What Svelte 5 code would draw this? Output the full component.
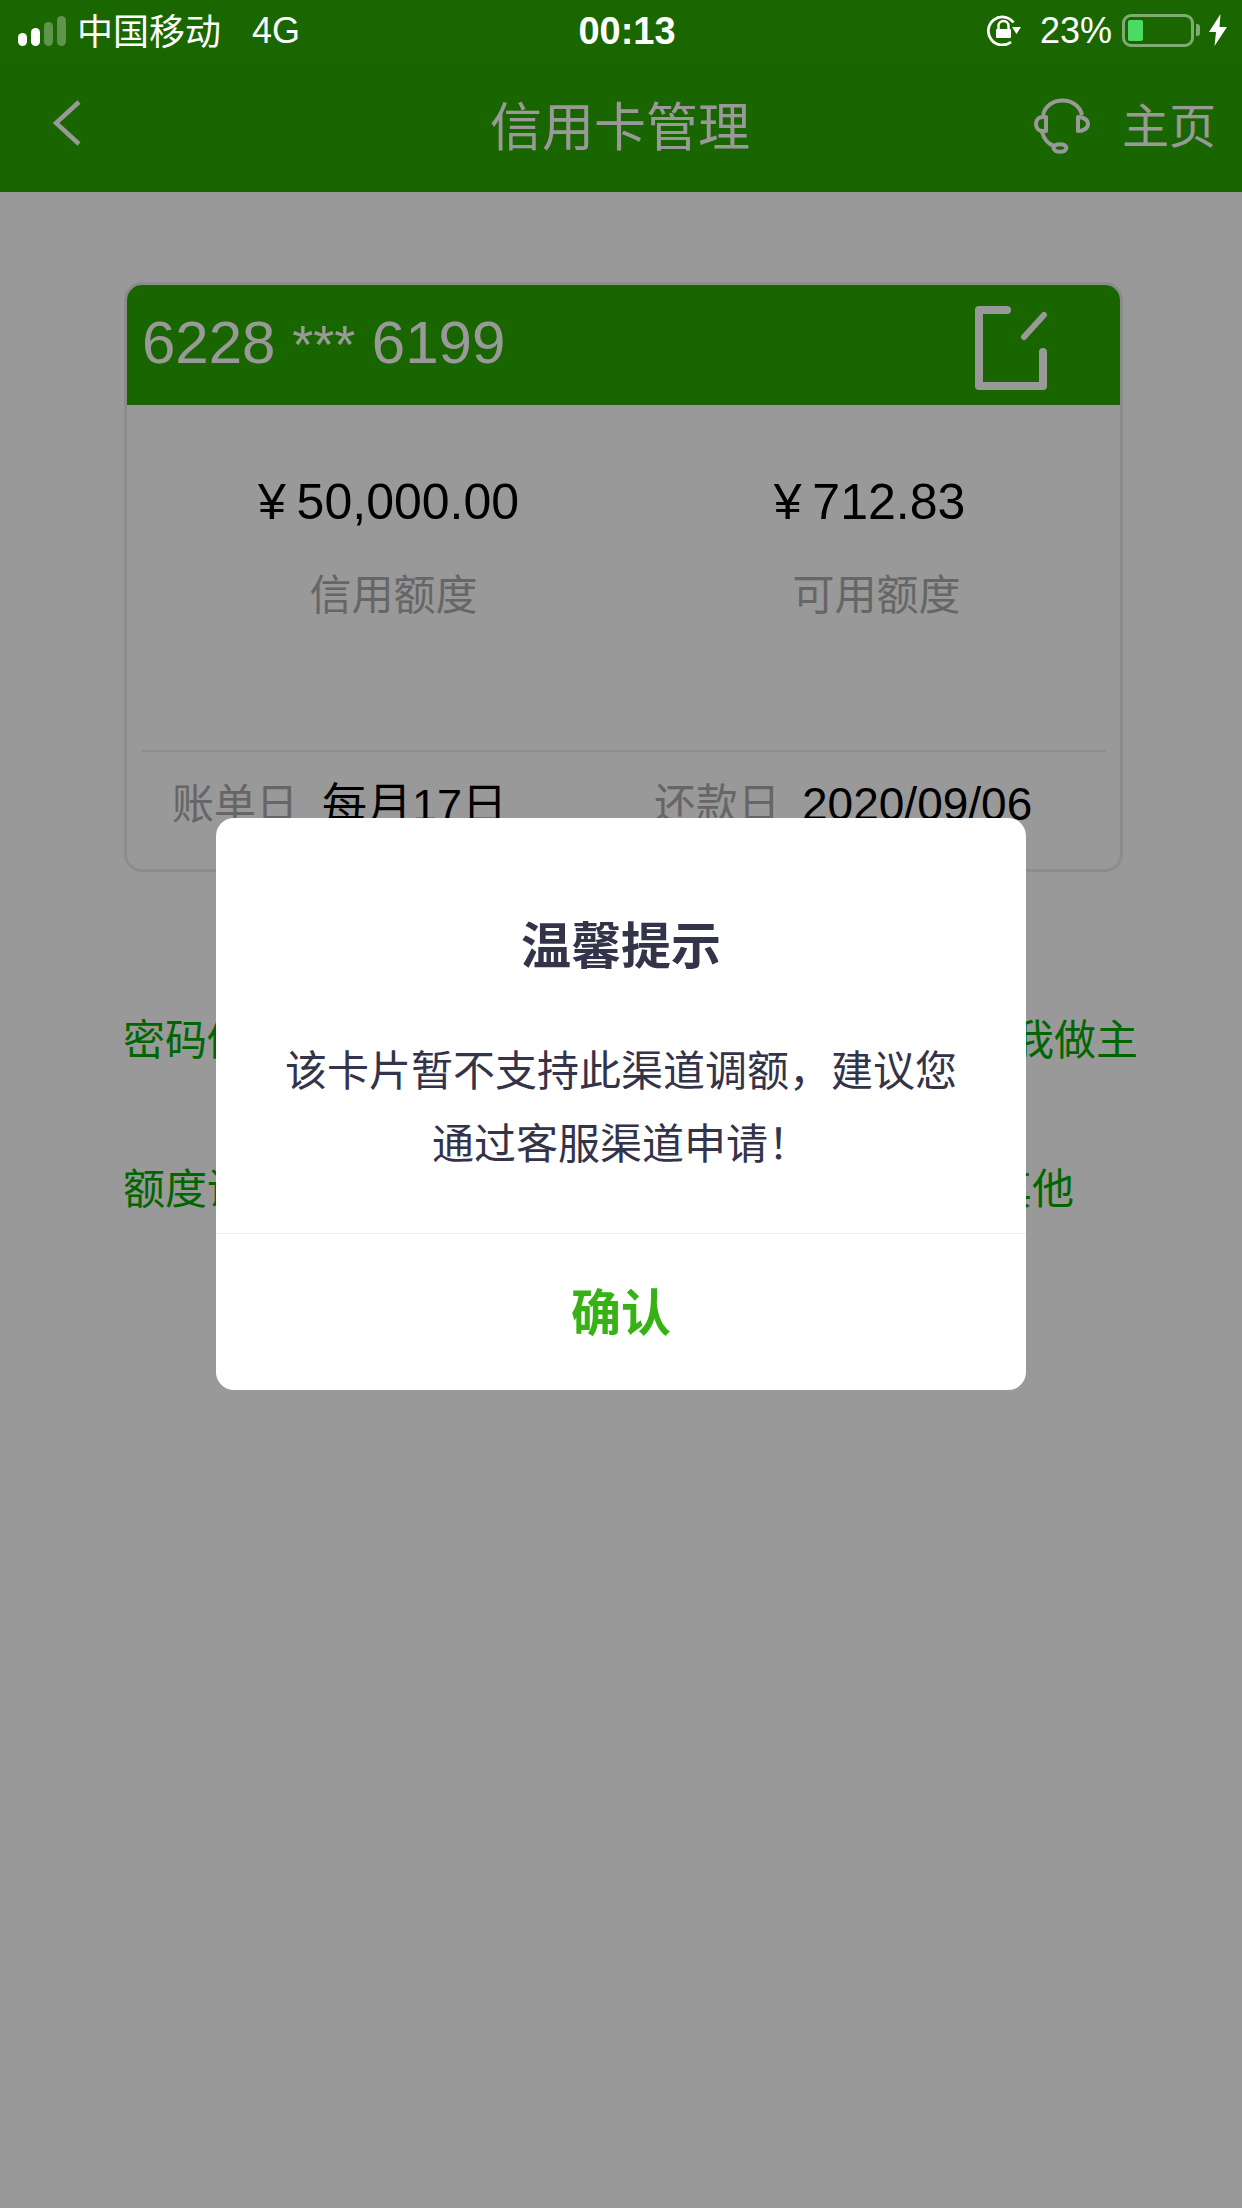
<script lang="ts">
  // Credit card management page with the "not supported" dialog open
  const links = [
    { left: '密码修改', right: '账单由我做主', short: false },
    { left: '额度调整', right: '卡片其他', short: true },
  ];
</script>

<div class="page">
  <div class="status">
    <div class="status-left">
      <svg class="signal" width="48" height="30" viewBox="0 0 48 30">
        <rect x="0" y="17" width="9" height="13" rx="4.5" fill="#fff" />
        <rect x="13" y="12" width="9" height="18" rx="4.5" fill="#fff" />
        <rect x="26" y="6" width="9" height="24" rx="4.5" fill="#fff" opacity="0.3" />
        <rect x="39" y="0" width="9" height="30" rx="4.5" fill="#fff" opacity="0.3" />
      </svg>
      <span class="carrier">中国移动</span>
      <span class="net">4G</span>
    </div>
    <div class="time">00:13</div>
    <div class="status-right">
      <svg class="lock" width="36" height="32" viewBox="0 0 36 32">
        <path d="M27.5 8.5A14 14 0 1 0 25 28" fill="none" stroke="#fff" stroke-width="2.8" />
        <path d="M26 13h9l-4.5 7z" fill="#fff" />
        <path d="M12.5 15v-3a5 5 0 0 1 10 0v3" fill="none" stroke="#fff" stroke-width="2.4" />
        <rect x="10" y="15" width="15" height="9" rx="1" fill="#fff" />
      </svg>
      <span class="pct">23%</span>
      <div class="battery"><div class="battery-fill"></div></div>
      <div class="battery-nub"></div>
      <svg class="bolt" width="18" height="32" viewBox="0 0 18 32">
        <path d="M11.5 0L0 18h7L5.5 32 18 13h-7.5z" fill="#fff" />
      </svg>
    </div>
  </div>

  <div class="nav">
    <div class="nav-left">
      <svg width="28" height="46" viewBox="0 0 28 46">
        <path d="M26 2L3 23l23 21" fill="none" stroke="#fff" stroke-width="4.5" />
      </svg>
    </div>
    <div class="nav-title">信用卡管理</div>
    <div class="nav-right">
      <svg width="58" height="58" viewBox="0 0 58 58">
        <path d="M9 18C11 9 19 3.5 28.5 3.5S46 9 48 18" fill="none" stroke="#fff" stroke-width="4" />
        <path d="M12 20H9C4 20 2 24 2 27s2 7 7 7h3z" fill="none" stroke="#fff" stroke-width="4" stroke-linejoin="round" />
        <path d="M44 20c6 0 10 3 10 7s-4 7-10 7z" fill="none" stroke="#fff" stroke-width="4" stroke-linejoin="round" />
        <path d="M8 35c2 7 6 12 12 14" fill="none" stroke="#fff" stroke-width="4" />
        <ellipse cx="26" cy="51" rx="6.5" ry="3.8" fill="none" stroke="#fff" stroke-width="4" />
      </svg>
      <span class="nav-home">主页</span>
    </div>
  </div>

  <div class="card">
    <div class="card-head">
      <span class="card-no">6228 <span class="stars">***</span> 6199</span>
      <svg class="edit" width="72" height="84" viewBox="0 0 72 84">
        <path d="M32 4H4v76h64V46" fill="none" stroke="#fff" stroke-width="8" stroke-linecap="round" stroke-linejoin="round" />
        <path d="M69 9L49 31" fill="none" stroke="#fff" stroke-width="6" stroke-linecap="round" />
      </svg>
    </div>
    <div class="amounts">
      <div class="amount-col">
        <div class="amount">¥ 50,000.00</div>
        <div class="label first">信用额度</div>
      </div>
      <div class="amount-col">
        <div class="amount">¥ 712.83</div>
        <div class="label second">可用额度</div>
      </div>
    </div>
    <div class="divider"></div>
    <div class="dates">
      <div class="date-item">
        <span class="label">账单日</span>
        <span class="date-value monthly">每月17日</span>
      </div>
      <div class="date-item">
        <span class="label">还款日</span>
        <span class="date-value repay">2020/09/06</span>
      </div>
    </div>
  </div>

  <div class="links">
    {#each links as row}
      <div class="link-row" class:short={row.short}>
        <span>{row.left}</span>
        <span>{row.right}</span>
      </div>
    {/each}
  </div>

  <div class="mask">
    <div class="dialog">
      <div class="dialog-body">
        <h2 class="dialog-title">温馨提示</h2>
        <p class="dialog-text">该卡片暂不支持此渠道调额，建议您<br />通过客服渠道申请！</p>
      </div>
      <div class="dialog-btn">确认</div>
    </div>
  </div>
</div>

<style>
  :global(body) {
    margin: 0;
    background: #fff;
  }

  .page {
    position: relative;
    width: 1242px;
    height: 2208px;
    overflow: hidden;
    background: #fff;
    font-family: "Liberation Sans", "Noto Sans CJK SC", sans-serif;
  }

  /* status bar sits above the mask, so it keeps full brightness */
  .status {
    position: relative;
    z-index: 20;
    height: 60px;
    display: grid;
    grid-template-columns: 1fr auto 1fr;
    align-items: center;
    background: #1a6600;
    color: #fff;
    font-size: 36px;
  }

  .status-left {
    display: flex;
    align-items: center;
    padding-left: 18px;
  }

  .signal {
    margin-top: 1px;
  }

  .carrier {
    margin-left: 11px;
    margin-bottom: 2px;
    font-family: "Noto Sans CJK SC", sans-serif;
  }

  .net {
    margin-left: 31px;
    margin-top: 2px;
    font-size: 36px;
  }

  .time {
    margin-left: 12px;
    margin-top: 2px;
    font-size: 38px;
    font-weight: 700;
  }

  .status-right {
    display: flex;
    align-items: center;
    justify-content: flex-end;
    padding-right: 15px;
  }

  .pct {
    margin-left: 18px;
    margin-top: 2px;
    font-size: 36px;
  }

  .battery {
    margin-left: 10px;
    width: 72px;
    height: 33px;
    box-sizing: border-box;
    padding: 3px;
    border: 3px solid rgba(255, 255, 255, 0.45);
    border-radius: 9px;
  }

  .battery-fill {
    width: 15px;
    height: 100%;
    background: #4cd964;
    border-radius: 2px;
  }

  .battery-nub {
    width: 4px;
    height: 12px;
    margin-left: 2px;
    background: rgba(255, 255, 255, 0.45);
    border-radius: 0 3px 3px 0;
  }

  .bolt {
    margin-left: 9px;
  }

  .nav {
    height: 132px;
    display: grid;
    grid-template-columns: 1fr auto 1fr;
    align-items: center;
    background: #2baa00;
    color: #fff;
    font-family: "Noto Sans CJK SC", sans-serif;
  }

  .nav-left {
    display: flex;
    padding-left: 53px;
    padding-bottom: 6px;
  }

  .nav-title {
    margin-bottom: 6px;
    margin-right: 2px;
    font-size: 52px;
  }

  .nav-right {
    display: flex;
    align-items: center;
    justify-content: flex-end;
    padding-right: 26px;
  }

  .nav-home {
    margin-left: 30px;
    margin-bottom: 8px;
    font-size: 47px;
  }

  .card {
    box-sizing: border-box;
    width: 999px;
    height: 590px;
    margin: 90px 0 0 124px;
    border: 3px solid #eaeaea;
    border-radius: 18px;
    overflow: hidden;
  }

  .card-head {
    height: 120px;
    display: flex;
    align-items: center;
    justify-content: space-between;
    padding: 0 73px 0 15px;
    background: #2baa00;
    color: #fff;
  }

  .card-no {
    margin-bottom: 6px;
    font-size: 60px;
  }

  .stars {
    font-size: 54px;
  }

  .edit {
    display: block;
    margin-top: 5px;
  }

  .amounts {
    display: grid;
    grid-template-columns: 481px 481px;
    padding: 62px 0 0 21px;
  }

  .amount-col {
    text-align: center;
  }

  .amount {
    font-size: 50px;
    line-height: 70px;
    color: #000;
    word-spacing: -3px;
  }

  .label {
    color: #aaa;
    font-size: 42px;
    line-height: 60px;
    font-family: "Noto Sans CJK SC", sans-serif;
  }

  .amount-col .label {
    margin-top: 25px;
  }

  .label.first {
    padding-left: 10px;
  }

  .label.second {
    padding-left: 14px;
  }

  .divider {
    height: 2px;
    margin: 128px 14px 0 15px;
    background: #eee;
  }

  .dates {
    display: grid;
    grid-template-columns: 482px 1fr;
    height: 98px;
    padding-left: 45px;
    align-items: center;
  }

  .date-item {
    display: flex;
    align-items: center;
  }

  .date-value {
    margin-left: 22px;
    color: #000;
    font-size: 46px;
    font-family: "Liberation Sans", "Noto Sans CJK SC", sans-serif;
  }

  .date-value.monthly {
    margin-left: 24px;
    font-size: 45px;
  }

  .date-value.repay {
    margin-top: 5px;
  }

  .links {
    display: flex;
    flex-direction: column;
    gap: 89px;
    margin: 135px 0 0 123px;
    width: 1015px;
    color: #0a0;
    font-size: 42px;
    line-height: 60px;
    font-family: "Noto Sans CJK SC", sans-serif;
  }

  .link-row {
    display: flex;
    justify-content: space-between;
  }

  .link-row.short {
    padding-right: 64px;
  }

  .mask {
    position: absolute;
    inset: 0;
    z-index: 10;
    display: flex;
    align-items: center;
    justify-content: center;
    background: rgba(0, 0, 0, 0.4);
  }

  .dialog {
    width: 810px;
    height: 572px;
    display: flex;
    flex-direction: column;
    background: #fff;
    border-radius: 18px;
    font-family: "Noto Sans CJK SC", sans-serif;
  }

  .dialog-body {
    height: 415px;
    text-align: center;
    border-bottom: 1px solid #eeeeee;
  }

  .dialog-title {
    margin: 0;
    padding-top: 85px;
    font-size: 50px;
    font-weight: 700;
    line-height: 78px;
    color: #33334a;
  }

  .dialog-text {
    margin: 50px 0 0;
    font-size: 42px;
    line-height: 73px;
    color: #33334a;
  }

  .dialog-btn {
    flex: 1;
    display: flex;
    align-items: center;
    justify-content: center;
    padding-bottom: 6px;
    color: #36b214;
    font-size: 50px;
    font-weight: 700;
  }
</style>
